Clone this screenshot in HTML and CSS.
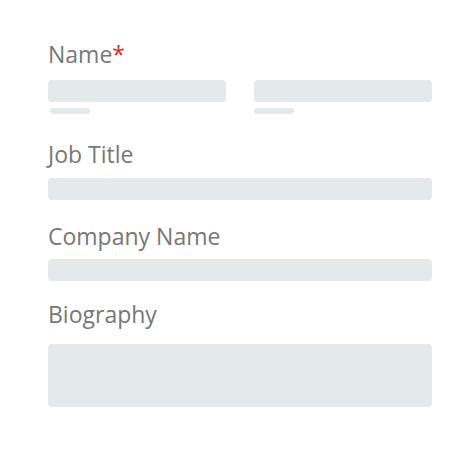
FILE: index.html
```html
<!DOCTYPE html>
<html>
<head>
<meta charset="utf-8">
<link rel="stylesheet" href="styles.css">
</head>
<body>
<form class="form">
  <div class="field field-name">
    <div class="label">Name<span class="req">*</span></div>
    <div class="row">
      <div class="col">
        <div class="input"></div>
        <div class="hint hint-first"></div>
      </div>
      <div class="col">
        <div class="input"></div>
        <div class="hint"></div>
      </div>
    </div>
  </div>
  <div class="field field-job">
    <div class="label">Job Title</div>
    <div class="input"></div>
  </div>
  <div class="field field-company">
    <div class="label">Company Name</div>
    <div class="input"></div>
  </div>
  <div class="field field-bio">
    <div class="label">Biography</div>
    <div class="input textarea"></div>
  </div>
</form>
</body>
</html>
```
FILE: styles.css
```css
html, body {
  margin: 0;
  padding: 0;
  background: #ffffff;
}
.form {
  padding: 39px 40px 0 48px;
  font-family: "Open Sans", "DejaVu Sans", sans-serif;
}
.label {
  font-size: 23px;
  line-height: 30px;
  color: #777777;
  font-weight: 400;
}
.req {
  color: #e02424;
}
.input {
  height: 22px;
  background: #e4e9ec;
  border-radius: 4px;
}
.textarea {
  height: 63px;
}
.row {
  display: grid;
  grid-template-columns: 1fr 1fr;
  column-gap: 28px;
  margin-top: 11px;
}
.hint {
  width: 40px;
  height: 6px;
  margin-top: 6px;
  background: #e4e9ec;
  border-radius: 3px;
}
.hint-first {
  margin-left: 2px;
}
.field-job {
  margin-top: 25px;
}
.field-job .label {
  margin-bottom: 9px;
}
.field-company {
  margin-top: 21px;
}
.field-company .label {
  margin-bottom: 8px;
}
.field-bio {
  margin-top: 18px;
}
.field-bio .label {
  margin-bottom: 15px;
}
```
